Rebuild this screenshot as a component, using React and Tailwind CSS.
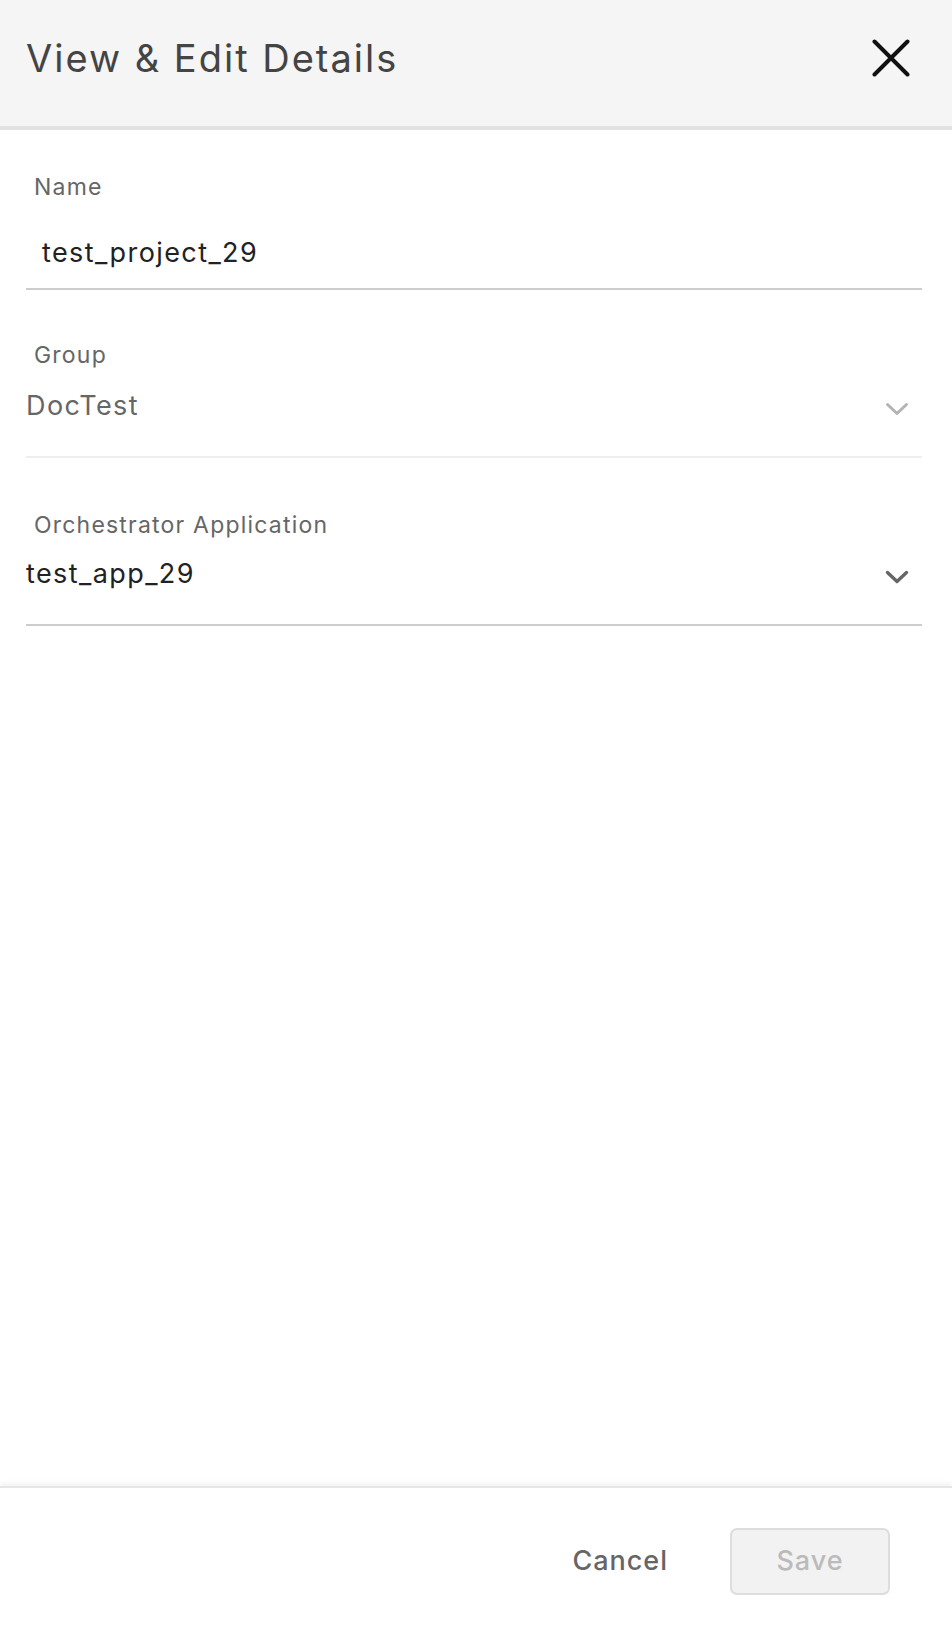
import React from 'react';

const font = { fontFamily: 'Inter, "Noto Sans", sans-serif' };

const Chevron = ({ color, width = 3 }) => (
  <svg width="26" height="16" viewBox="0 0 26 16" fill="none">
    <path d="M3.5 3.5 L13 12.5 L22.5 3.5" stroke={color} strokeWidth={width} strokeLinecap="round" strokeLinejoin="round" />
  </svg>
);

const Field = ({ label, value, valueClass, chevron, lineClass, valuePad = 'pl-0', top, gap, bottom }) => (
  <div className={`${top} ${lineClass} border-b-2`}>
    <div className="pl-[8px] text-[23px] tracking-[1.2px] leading-[30px] text-[#666]">{label}</div>
    <div className={`flex items-center justify-between ${gap} ${bottom}`}>
      <div className={`${valuePad} text-[27px] tracking-[1.4px] leading-[36px] ${valueClass}`}>{value}</div>
      {chevron && <div className="pr-[12px] pt-[6px]">{chevron}</div>}
    </div>
  </div>
);

export default function App() {
  return (
    <div className="w-[952px] h-[1634px] flex flex-col bg-white" style={font}>
      {/* header */}
      <div className="h-[130px] shrink-0 bg-[#f5f5f5] border-b-4 border-[#e2e2e2] flex items-center justify-between pl-[26px] pr-[42px]">
        <h1 className="text-[38px] tracking-[2px] leading-[44px] text-[#444] font-normal -mt-[10px]">View &amp; Edit Details</h1>
        <button className="w-[38px] h-[38px] flex items-center justify-center -mt-[10px]">
          <svg width="38" height="38" viewBox="0 0 38 38">
            <path d="M2.5 2.5 L35.5 35.5 M35.5 2.5 L2.5 35.5" stroke="#111" strokeWidth="4" strokeLinecap="round" />
          </svg>
        </button>
      </div>

      {/* form */}
      <div className="flex-1 px-[26px] pr-[30px]">
        <Field
          label="Name"
          value="test_project_29"
          valueClass="text-[#222]"
          valuePad="pl-[16px]"
          lineClass="border-[#cccccc]"
          top="mt-[42px]"
          gap="mt-[33px]"
          bottom="pb-[17px]"
        />
        <Field
          label="Group"
          value="DocTest"
          valueClass="text-[#666]"
          lineClass="border-[#eeeeee]"
          chevron={<Chevron color="#b3b3b3" width={3} />}
          top="mt-[50px]"
          gap="mt-[18px]"
          bottom="pb-[32px]"
        />
        <Field
          label="Orchestrator Application"
          value="test_app_29"
          valueClass="text-[#222]"
          lineClass="border-[#cccccc]"
          chevron={<Chevron color="#666" width={3.4} />}
          top="mt-[52px]"
          gap="mt-[16px]"
          bottom="pb-[32px]"
        />
      </div>

      {/* footer */}
      <div className="h-[148px] shrink-0 border-t-2 border-[#e6e6e6] shadow-[0_-3px_5px_rgba(0,0,0,0.05)] flex items-center justify-end pr-[62px] gap-[62px]">
        <button className="text-[27px] tracking-[1px] font-medium text-[#666]">Cancel</button>
        <button disabled className="w-[160px] h-[67px] rounded-[7px] border-2 border-[#dddddd] bg-[#f2f2f2] text-[27px] tracking-[1px] font-medium text-[#bbbbbb]">
          Save
        </button>
      </div>
    </div>
  );
}
